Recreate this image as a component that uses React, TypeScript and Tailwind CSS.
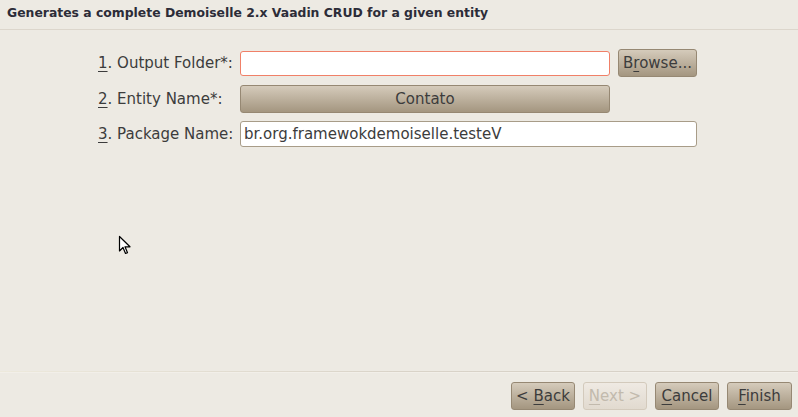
const font = { fontFamily: '"DejaVu Sans", sans-serif' };

function WizButton({
  children,
  disabled,
  className = "",
}: {
  children: React.ReactNode;
  disabled?: boolean;
  className?: string;
}) {
  return (
    <button
      className={
        "h-[28px] rounded-[3px] border text-[15px] leading-none whitespace-pre " +
        (disabled
          ? "border-[#d3cabc] bg-gradient-to-b from-[#efeae3] to-[#e1dacf] text-[#c2baad]"
          : "border-[#968873] bg-gradient-to-b from-[#d5cbbb] to-[#a49680] text-[#3c3c3c]") +
        " " +
        className
      }
      style={font}
    >
      {children}
    </button>
  );
}

const U = ({ children }: { children: React.ReactNode }) => (
  <span className="underline underline-offset-[3px] decoration-1">{children}</span>
);

export default function App() {
  return (
    <div
      className="relative w-[798px] h-[417px] bg-[#edeae3] flex flex-col text-[#3c3c3c] overflow-hidden"
      style={font}
    >
      <div className="h-[30px] border-b border-[#dcd6cc] flex items-center pl-[7px] pb-[2px]">
        <h1 className="text-[12.4px] font-bold text-[#2c2c38] whitespace-nowrap">
          Generates a complete Demoiselle 2.x Vaadin CRUD for a given entity
        </h1>
      </div>

      <div className="flex-1 pt-[19px] pl-[98px]">
        <div className="grid grid-cols-[134px_370px_79px] gap-x-2 gap-y-2 text-[15px] w-min">
          <div className="h-[28px] leading-[28px] whitespace-nowrap">
            <U>1</U>. Output Folder*:
          </div>
          <input
            className="self-center h-[25px] rounded-[3px] border border-[#f08068] bg-white px-1 outline-none"
            style={font}
          />
          <WizButton>
            B<U>r</U>owse...
          </WizButton>

          <div className="h-[28px] leading-[28px] whitespace-nowrap">
            <U>2</U>. Entity Name*:
          </div>
          <WizButton className="self-center h-[27px]">Contato</WizButton>
          <div />

          <div className="h-[26px] leading-[26px] whitespace-nowrap">
            <U>3</U>. Package Name:
          </div>
          <input
            className="col-span-2 h-[26px] rounded-[3px] border border-[#a89c88] bg-white px-[3px] text-[15px] text-[#3c3c3c] outline-none"
            style={font}
            defaultValue="br.org.framewokdemoiselle.testeV"
          />
        </div>
      </div>

      <div className="h-px bg-gradient-to-r from-[#ede9dc] via-[#d9d3c8] to-[#d6d0c6]" />
      <div className="h-px bg-[#f2efe9]" />
      <div className="flex justify-end gap-2 pt-[9px] pb-[7px] pr-[6px]">
        <WizButton className="w-[64px]">
          &lt; <U>B</U>ack
        </WizButton>
        <WizButton className="w-[64px]" disabled>
          <U>N</U>ext &gt;
        </WizButton>
        <WizButton className="w-[64px]">
          <U>C</U>ancel
        </WizButton>
        <WizButton className="w-[65px]">
          <U>F</U>inish
        </WizButton>
      </div>

      <svg
        className="absolute left-[118px] top-[235px]"
        width="14"
        height="21"
        viewBox="0 0 14 21"
      >
        <path
          d="M1.5 1.5 L1.5 16 L5 12.5 L7.5 18.5 L9.5 17.7 L7 11.8 L12 11.8 Z"
          fill="#fff"
          stroke="#000"
          strokeWidth="1.2"
          strokeLinejoin="round"
        />
      </svg>
    </div>
  );
}
